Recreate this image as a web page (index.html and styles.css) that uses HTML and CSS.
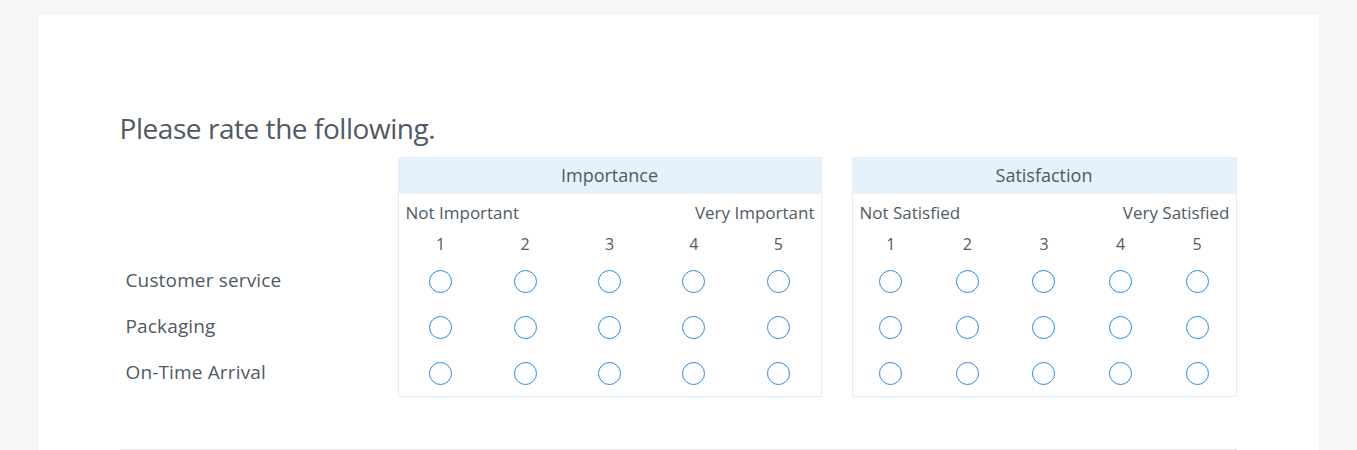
FILE: index.html
```html
<!DOCTYPE html>
<html lang="en">
<head>
<meta charset="utf-8">
<title>Please rate the following.</title>
<link rel="stylesheet" href="styles.css">
</head>
<body>
<div class="card">
  <h1 class="title">Please rate the following.</h1>
  <div class="matrix">
    <div class="labels">
      <div class="label-spacer"></div>
      <div class="row-label">Customer service</div>
      <div class="row-label">Packaging</div>
      <div class="row-label">On-Time Arrival</div>
    </div>
    <div class="scale scale-importance">
      <div class="scale-head">Importance</div>
      <div class="anchors"><span>Not Important</span><span>Very Important</span></div>
      <div class="cells nums"><span>1</span><span>2</span><span>3</span><span>4</span><span>5</span></div>
      <div class="cells radios"><input type="radio" name="imp1"><input type="radio" name="imp1"><input type="radio" name="imp1"><input type="radio" name="imp1"><input type="radio" name="imp1"></div>
      <div class="cells radios"><input type="radio" name="imp2"><input type="radio" name="imp2"><input type="radio" name="imp2"><input type="radio" name="imp2"><input type="radio" name="imp2"></div>
      <div class="cells radios"><input type="radio" name="imp3"><input type="radio" name="imp3"><input type="radio" name="imp3"><input type="radio" name="imp3"><input type="radio" name="imp3"></div>
    </div>
    <div class="scale scale-satisfaction">
      <div class="scale-head">Satisfaction</div>
      <div class="anchors"><span>Not Satisfied</span><span>Very Satisfied</span></div>
      <div class="cells nums"><span>1</span><span>2</span><span>3</span><span>4</span><span>5</span></div>
      <div class="cells radios"><input type="radio" name="sat1"><input type="radio" name="sat1"><input type="radio" name="sat1"><input type="radio" name="sat1"><input type="radio" name="sat1"></div>
      <div class="cells radios"><input type="radio" name="sat2"><input type="radio" name="sat2"><input type="radio" name="sat2"><input type="radio" name="sat2"><input type="radio" name="sat2"></div>
      <div class="cells radios"><input type="radio" name="sat3"><input type="radio" name="sat3"><input type="radio" name="sat3"><input type="radio" name="sat3"><input type="radio" name="sat3"></div>
    </div>
  </div>
  <div class="divider"></div>
</div>
</body>
</html>
```

FILE: styles.css
```css
* { box-sizing: border-box; }

html, body {
  margin: 0;
  padding: 0;
  background: #f6f6f6;
  font-family: "Open Sans", "Noto Sans", sans-serif;
  color: #4f5a65;
}

.card {
  width: 1280px;
  margin: 15px auto 0;
  background: #ffffff;
  padding: 96px 82px 0 81px;
  min-height: 435px;
}

.title {
  margin: 0 0 12px;
  font-size: 28px;
  line-height: 34px;
  font-weight: 400;
  letter-spacing: -0.45px;
  color: #4f5a65;
}

.matrix {
  display: flex;
  align-items: flex-start;
}

.labels {
  width: 278px;
  flex: none;
}

.label-spacer {
  height: 101px;
}

.row-label {
  height: 46px;
  display: flex;
  align-items: center;
  padding: 0 0 2px 6px;
  font-size: 19px;
  letter-spacing: 0.15px;
  color: #4f5a65;
}

.scale {
  flex: none;
  border: 1px solid #e2eef9;
}

.scale-importance { width: 424px; }
.scale-satisfaction { width: 385px; margin-left: 30px; }

.scale-head {
  height: 36px;
  background: #e5f1fb;
  display: flex;
  align-items: center;
  justify-content: center;
  padding-bottom: 3px;
  font-size: 18px;
}

.anchors {
  display: flex;
  justify-content: space-between;
  padding: 8px 6px 7px 7px;
  line-height: 22px;
  font-size: 17px;
}

.cells {
  display: grid;
  grid-template-columns: repeat(5, 1fr);
  justify-items: center;
  align-items: center;
}

.nums {
  height: 27px;
  font-size: 16px;
  line-height: 25px;
}

.radios {
  height: 46px;
}

.radios input {
  appearance: none;
  -webkit-appearance: none;
  margin: 0;
  width: 23px;
  height: 23px;
  border: 1.6px solid #268be6;
  border-radius: 50%;
  background: #fff;
}

.divider {
  margin-top: 52px;
  height: 1px;
  background: #e6e6e6;
}
```
